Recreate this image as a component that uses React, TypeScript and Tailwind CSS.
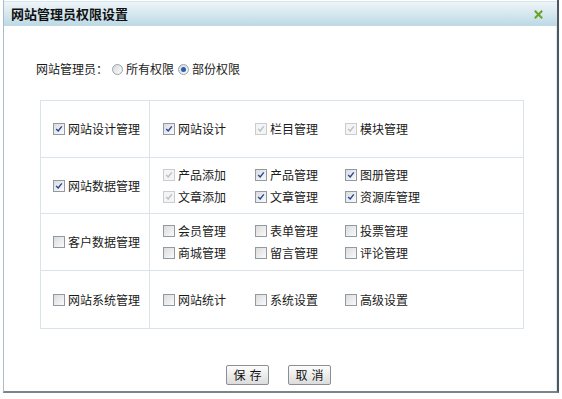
import React from "react";

const FONT = { fontFamily: '"Noto Sans CJK SC", "Noto Sans", sans-serif' };

type CbState = "on" | "off" | "dis";

function Box({ s }: { s: CbState }) {
  return (
    <span
      className={
        "relative inline-block w-[12px] h-[12px] shrink-0 border " +
        (s === "dis"
          ? "border-[#c9cdd1] bg-[#f4f4f4]"
          : "border-[#8f9aa3] bg-gradient-to-br from-[#dcdcdc] to-[#fafafa]")
      }
    >
      {s !== "off" && (
        <svg
          viewBox="0 0 10 10"
          className="absolute left-[1px] top-[1px] w-[8px] h-[8px]"
        >
          <path
            d="M1.5 5 L4 7.5 L8.5 1.8"
            fill="none"
            stroke={s === "on" ? "#21449c" : "#b9bec2"}
            strokeWidth="1.7"
          />
        </svg>
      )}
    </span>
  );
}

function Cb({ s, label }: { s: CbState; label: string }) {
  return (
    <div className="flex items-center gap-[3px] text-[12px] leading-[14px] text-[#1a1a1a]">
      <Box s={s} />
      <span>{label}</span>
    </div>
  );
}

function Radio({ on }: { on: boolean }) {
  return (
    <span className="relative inline-block w-[11px] h-[11px] rounded-full border border-[#9aa4ac] bg-gradient-to-br from-[#d6d9dc] to-[#fbfbfb]">
      {on && (
        <span className="absolute left-[2px] top-[2px] w-[5px] h-[5px] rounded-full bg-[#2a5fb0]" />
      )}
    </span>
  );
}

type Row = { main: [CbState, string]; h: number; items: [CbState, string][] };

const rows: Row[] = [
  {
    main: ["on", "网站设计管理"],
    h: 58,
    items: [
      ["on", "网站设计"],
      ["dis", "栏目管理"],
      ["dis", "模块管理"],
    ],
  },
  {
    main: ["on", "网站数据管理"],
    h: 56,
    items: [
      ["dis", "产品添加"],
      ["on", "产品管理"],
      ["on", "图册管理"],
      ["dis", "文章添加"],
      ["on", "文章管理"],
      ["on", "资源库管理"],
    ],
  },
  {
    main: ["off", "客户数据管理"],
    h: 57,
    items: [
      ["off", "会员管理"],
      ["off", "表单管理"],
      ["off", "投票管理"],
      ["off", "商城管理"],
      ["off", "留言管理"],
      ["off", "评论管理"],
    ],
  },
  {
    main: ["off", "网站系统管理"],
    h: 57,
    items: [
      ["off", "网站统计"],
      ["off", "系统设置"],
      ["off", "高级设置"],
    ],
  },
];

function Btn({ label }: { label: string }) {
  return (
    <button className="w-[43px] h-[20px] rounded-[2px] border border-[#8a8f94] bg-gradient-to-b from-[#fdfdfd] to-[#dcdcdc] text-[12px] leading-[18px] text-[#111] tracking-[4px] pl-[4px]">
      {label}
    </button>
  );
}

export default function App() {
  return (
    <div className="w-[562px] h-[399px] bg-white" style={FONT}>
      <div className="ml-[3px] w-[556px] h-[393px] border-l border-l-[#a9bccb] border-r-2 border-r-[#4c585e] border-b-2 border-b-[#7b8489] flex flex-col bg-white">
        <div className="h-[25px] mt-[1px] flex items-center justify-between px-[7px] bg-gradient-to-b from-[#eef5f8] to-[#bcd9e5] border-t border-t-[#d6e6ee]">
          <span className="text-[13px] font-bold text-[#111]">网站管理员权限设置</span>
          <svg viewBox="0 0 12 12" className="w-[11px] h-[11px] mr-[6px]">
            <path d="M2 2 L10 10 M10 2 L2 10" stroke="#6aa329" strokeWidth="2.2" />
          </svg>
        </div>
        <div className="flex-1 flex flex-col border-r border-r-[#dfe8ee]">
          <div className="mt-[36px] ml-[32px] flex items-center text-[12px] leading-[14px] text-[#1a1a1a]">
            <span>网站管理员：</span>
            <span className="ml-[4px] flex items-center gap-[3px]">
              <Radio on={false} />
              <span>所有权限</span>
            </span>
            <span className="ml-[4px] flex items-center gap-[3px]">
              <Radio on={true} />
              <span>部份权限</span>
            </span>
          </div>
          <div className="mt-[24px] ml-[36px] w-[484px] border border-[#dbe3ea]">
            {rows.map((r, i) => (
              <div
                key={i}
                className={
                  "flex " + (i < rows.length - 1 ? "border-b border-b-[#dbe3ea]" : "")
                }
                style={{ height: r.h - (i === 0 ? 1 : 0) }}
              >
                <div className="w-[109px] border-r border-r-[#dbe3ea] flex items-center pl-[12px]">
                  <Cb s={r.main[0]} label={r.main[1]} />
                </div>
                <div className="flex-1 flex items-center pl-[13px]">
                  <div className="grid grid-cols-[92px_90px_90px] gap-y-[8px]">
                    {r.items.map((it, j) => (
                      <Cb key={j} s={it[0]} label={it[1]} />
                    ))}
                  </div>
                </div>
              </div>
            ))}
          </div>
          <div className="mt-[36px] flex justify-center gap-[19px] pr-[3px]">
            <Btn label="保存" />
            <Btn label="取消" />
          </div>
        </div>
      </div>
    </div>
  );
}
